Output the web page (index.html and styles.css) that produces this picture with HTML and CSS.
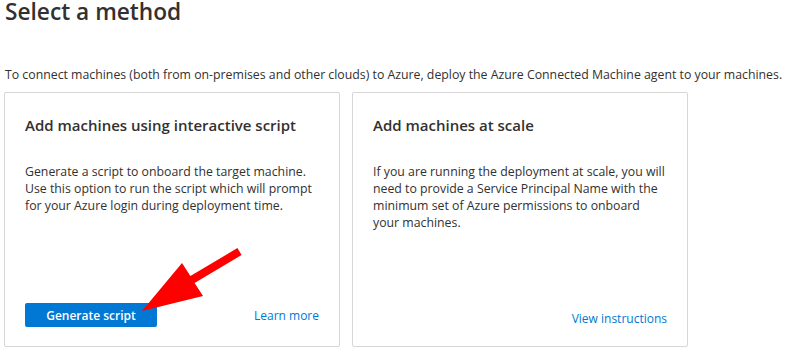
FILE: index.html
```html
<!DOCTYPE html>
<html lang="en">
<head>
  <meta charset="UTF-8" />
  <title>Select a method</title>
  <link rel="stylesheet" href="styles.css">
</head>
<body>
  <h1 class="page-title">Select a method</h1>

  <p class="intro">To connect machines (both from on-premises and other clouds) to Azure, deploy the Azure Connected Machine agent to your machines.</p>

  <div class="method-list">
    <div class="method-card">
      <h2 class="method-title">Add machines using interactive script</h2>
      <p class="method-text">Generate a script to onboard the target machine. Use this option to run the script which will prompt for your Azure login during deployment time.</p>
      <div class="method-footer">
        <button class="primary-btn">Generate script</button>
        <a href="#" class="link">Learn more</a>
      </div>
    </div>

    <div class="method-card">
      <h2 class="method-title">Add machines at scale</h2>
      <p class="method-text">If you are running the deployment at scale, you will need to provide a Service Principal Name with the minimum set of Azure permissions to onboard<br>your machines.</p>
      <div class="method-footer method-footer-end">
        <a href="#" class="link">View instructions</a>
      </div>
    </div>
  </div>

  <svg class="callout-arrow" width="788" height="356" viewBox="0 0 788 356">
    <polygon fill="#ff0000" points="142,311 182,263 190.4,276.1 237.4,248.1 241.6,254.9 194.6,282.9 203,296" />
  </svg>
</body>
</html>
```

FILE: styles.css
```css
body {
  margin: 0;
  padding: 0 4px;
  background-color: #fff;
  color: #323130;
  font-family: "Open Sans", "Liberation Sans", sans-serif;
  position: relative;
  height: 356px;
  overflow: hidden;
}

.page-title {
  margin: 0 0 0 1px;
  font-size: 22.7px;
  line-height: 24px;
  font-weight: 600;
}

.intro {
  margin: 43px 0 0 1px;
  font-size: 12.3px;
  line-height: 16px;
  white-space: nowrap;
}

.method-list {
  display: flex;
  gap: 12px;
  margin-top: 9px;
}

.method-card {
  display: flex;
  flex-direction: column;
  box-sizing: border-box;
  width: 336px;
  height: 255px;
  padding: 22px 20px 19px 20px;
  border: 1px solid #d6d6d6;
  border-radius: 2px;
}

.method-title {
  margin: 0;
  font-size: 15px;
  line-height: 20px;
  font-weight: 600;
}

.method-text {
  margin: 28px 0 0 0;
  font-size: 12.3px;
  line-height: 17px;
}

.method-footer {
  margin-top: auto;
  display: flex;
  justify-content: space-between;
  align-items: center;
}

.method-footer-end {
  justify-content: flex-end;
  align-items: flex-end;
  height: 24px;
}

.primary-btn {
  width: 132px;
  height: 24px;
  padding: 0;
  border: none;
  border-radius: 2px;
  background-color: #0078d4;
  color: #fff;
  font-family: inherit;
  font-size: 12px;
  font-weight: 600;
  cursor: pointer;
}

.link {
  color: #0078d4;
  font-size: 12px;
  line-height: 17px;
  text-decoration: none;
}

.callout-arrow {
  position: absolute;
  top: 0;
  left: 0;
  pointer-events: none;
}
```
